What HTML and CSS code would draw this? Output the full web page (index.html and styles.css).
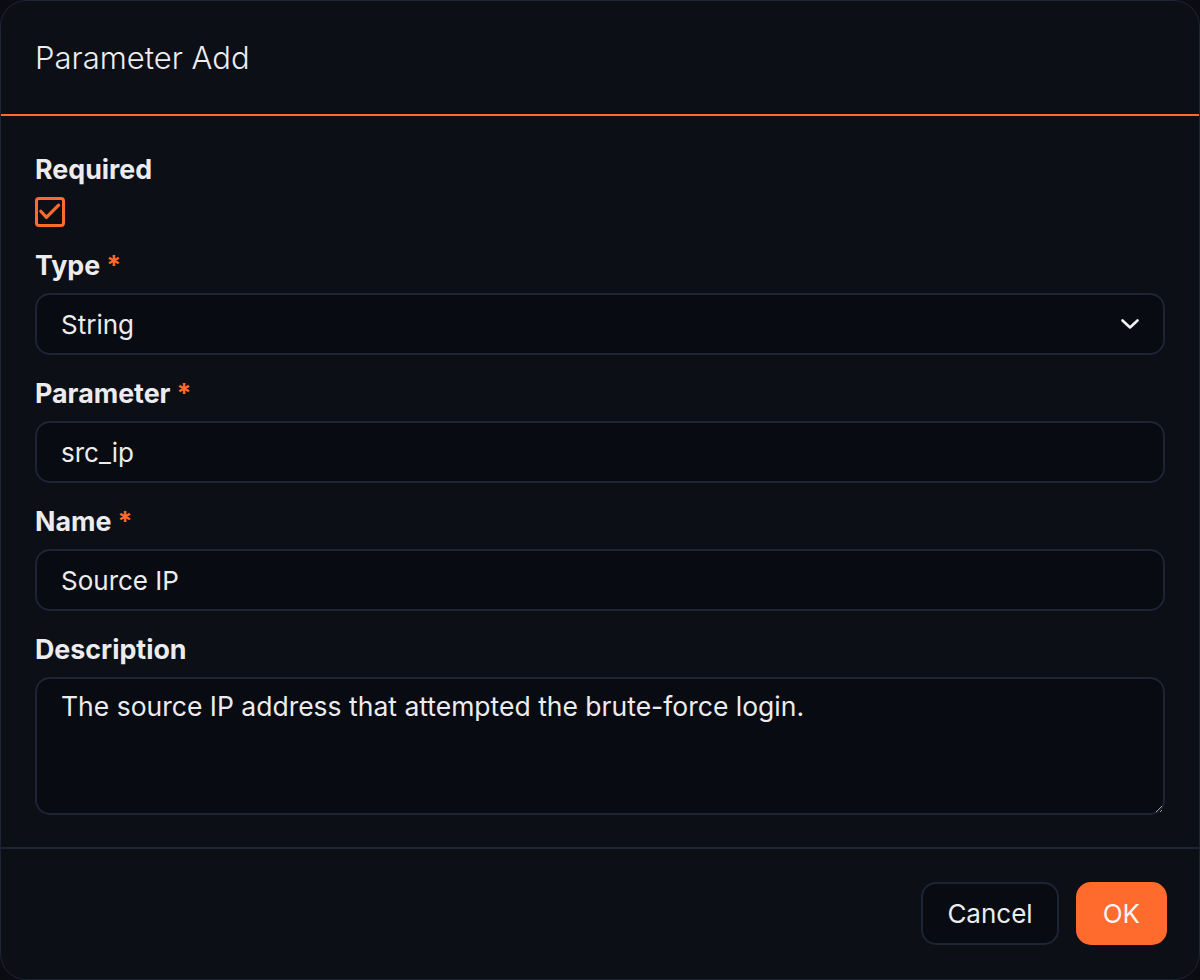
FILE: index.html
```html
<!DOCTYPE html>
<html lang="en">
<head>
<meta charset="utf-8">
<title>Parameter Add</title>
<link rel="stylesheet" href="styles.css">
</head>
<body>
<div class="modal">
  <div class="modal-header">
    <h1 class="modal-title">Parameter Add</h1>
  </div>
  <div class="modal-body">
    <div class="field">
      <label class="label">Required</label>
      <span class="checkbox">
        <svg viewBox="0 0 24 24" width="24" height="24"><path d="M2.8 11.2l5.6 6.2L20.6 5.2" fill="none" stroke="#ff6b2c" stroke-width="3.2" stroke-linecap="round" stroke-linejoin="round"/></svg>
      </span>
    </div>
    <div class="field">
      <label class="label">Type<span class="req">*</span></label>
      <div class="control select">
        <span>String</span>
        <svg class="chev" viewBox="0 0 20 12" width="20" height="12"><path d="M2.5 2.5l7.5 7 7.5-7" fill="none" stroke="#f2f2f2" stroke-width="2.6" stroke-linecap="round" stroke-linejoin="round"/></svg>
      </div>
    </div>
    <div class="field">
      <label class="label">Parameter<span class="req">*</span></label>
      <input class="control" type="text" value="src_ip">
    </div>
    <div class="field">
      <label class="label">Name<span class="req">*</span></label>
      <input class="control" type="text" value="Source IP">
    </div>
    <div class="field">
      <label class="label">Description</label>
      <textarea class="control textarea">The source IP address that attempted the brute-force login.</textarea>
    </div>
  </div>
  <div class="modal-footer">
    <button class="btn btn-cancel">Cancel</button>
    <button class="btn btn-ok">OK</button>
  </div>
</div>
</body>
</html>
```
FILE: styles.css
```css
* { box-sizing: border-box; }
html, body {
  margin: 0;
  padding: 0;
  background: #0a0c12;
  color-scheme: dark;
}
body {
  font-family: Inter, "Noto Sans", sans-serif;
  color: #ececee;
}
.modal {
  width: 1200px;
  height: 980px;
  background: #0c0f16;
  border: 1px solid #1f2434;
  border-radius: 26px;
  display: flex;
  flex-direction: column;
  overflow: hidden;
}
.modal-header {
  height: 115px;
  flex: 0 0 auto;
  border-bottom: 2px solid #ff6b2c;
  display: flex;
  align-items: center;
  padding: 0 34px;
}
.modal-title {
  margin: 0;
  font-size: 31px;
  font-weight: 300;
  color: #ededef;
}
.modal-body {
  padding: 35px 34px 0;
  display: flex;
  flex-direction: column;
  gap: 20px;
}
.field {
  display: flex;
  flex-direction: column;
  gap: 10px;
}
.label {
  font-size: 26.8px;
  line-height: 36px;
  font-weight: 700;
  color: #ececee;
}
.req {
  color: #ff6b2c;
  margin-left: 6px;
  font-weight: 700;
}
.checkbox {
  width: 30px;
  height: 30px;
  border: 3px solid #ff6b2c;
  border-radius: 4px;
  display: flex;
  align-items: center;
  justify-content: center;
}
.checkbox svg { display: block; }
.control {
  width: 100%;
  height: 62px;
  background: #080b12;
  border: 2px solid #1e2335;
  border-radius: 15px;
  color: #ececee;
  font-family: Inter, "Noto Sans", sans-serif;
  font-size: 26px;
  padding: 0 24px;
  outline: none;
  margin: 0;
}
.select {
  display: flex;
  align-items: center;
  justify-content: space-between;
  padding-right: 23px;
}
.chev { display: block; }
.textarea {
  height: 138px;
  padding: 9px 24px;
  font-size: 26.5px;
  line-height: 36px;
  resize: vertical;
  display: block;
}
.modal-footer {
  margin-top: auto;
  flex: 0 0 auto;
  border-top: 2px solid #1e2335;
  padding: 33px 32px 0;
  height: 132px;
  display: flex;
  justify-content: flex-end;
  align-items: flex-start;
  gap: 17px;
}
.btn {
  height: 63px;
  border-radius: 15px;
  font-family: Inter, "Noto Sans", sans-serif;
  font-size: 26px;
  font-weight: 400;
  padding: 0 24px;
  cursor: pointer;
}
.btn-cancel {
  background: #080b12;
  border: 2px solid #1e2335;
  color: #ececee;
}
.btn-ok {
  background: #ff6b2c;
  border: 2px solid #ff6b2c;
  color: #f4f4f4;
  padding: 0 25px;
}
```
